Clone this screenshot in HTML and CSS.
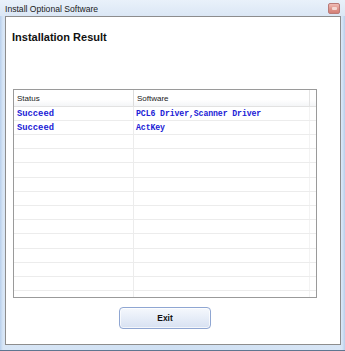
FILE: index.html
```html
<!DOCTYPE html>
<html>
<head>
<meta charset="utf-8">
<link rel="stylesheet" href="styles.css">
</head>
<body>
<div class="window">
  <div class="titlebar">
    <span class="title">Install Optional Software</span>
    <span class="close"><span class="close-glyph"></span></span>
  </div>
  <div class="client">
    <h1 class="heading">Installation Result</h1>
    <div class="table">
      <div class="row head">
        <div class="cell c1">Status</div>
        <div class="cell c2">Software</div>
        <div class="cell c3"></div>
      </div>
      <div class="rows">
        <div class="row"><div class="cell c1 status">Succeed</div><div class="cell c2 soft">PCL6 Driver,Scanner Driver</div><div class="cell c3"></div></div>
        <div class="row"><div class="cell c1 status">Succeed</div><div class="cell c2 soft">ActKey</div><div class="cell c3"></div></div>
        <div class="row"><div class="cell c1"></div><div class="cell c2"></div><div class="cell c3"></div></div>
        <div class="row"><div class="cell c1"></div><div class="cell c2"></div><div class="cell c3"></div></div>
        <div class="row"><div class="cell c1"></div><div class="cell c2"></div><div class="cell c3"></div></div>
        <div class="row"><div class="cell c1"></div><div class="cell c2"></div><div class="cell c3"></div></div>
        <div class="row"><div class="cell c1"></div><div class="cell c2"></div><div class="cell c3"></div></div>
        <div class="row"><div class="cell c1"></div><div class="cell c2"></div><div class="cell c3"></div></div>
        <div class="row"><div class="cell c1"></div><div class="cell c2"></div><div class="cell c3"></div></div>
        <div class="row"><div class="cell c1"></div><div class="cell c2"></div><div class="cell c3"></div></div>
        <div class="row"><div class="cell c1"></div><div class="cell c2"></div><div class="cell c3"></div></div>
        <div class="row"><div class="cell c1"></div><div class="cell c2"></div><div class="cell c3"></div></div>
        <div class="row"><div class="cell c1"></div><div class="cell c2"></div><div class="cell c3"></div></div>
        <div class="row"><div class="cell c1"></div><div class="cell c2"></div><div class="cell c3"></div></div>
      </div>
    </div>
    <div class="actions">
      <button class="btn">Exit</button>
    </div>
  </div>
</div>
</body>
</html>
```
FILE: styles.css
```css
* { box-sizing: border-box; }
html, body { margin: 0; padding: 0; background: #fff; }
.window {
  width: 345px;
  height: 351px;
  display: flex;
  flex-direction: column;
  background: linear-gradient(90deg, #b9d0ec 0, #d8e6f6 3px, #cfe0f3 50%, #d8e6f6 calc(100% - 3px), #b9d0ec 100%);
  border-bottom: 1px solid #5f7690;
  font-family: "Liberation Sans", Arial, sans-serif;
}
.titlebar {
  height: 16px;
  flex: none;
  display: flex;
  align-items: center;
  justify-content: space-between;
  padding: 0 5px 0 5px;
  background: linear-gradient(180deg, #e9f1fa 0, #dbe7f5 100%);
}
.title {
  font-size: 8.6px;
  color: #1b1b1b;
  padding-top: 1px;
}
.close {
  width: 12px;
  height: 11px;
  margin-top: 1px;
  border: 1px solid #b97a78;
  border-radius: 2px;
  background: linear-gradient(180deg, #f0bcb6 0, #de948c 55%, #d47f76 100%);
  display: flex;
  align-items: center;
  justify-content: center;
}
.close-glyph {
  width: 5px;
  height: 3px;
  background: #f4d8d4;
  border-radius: 1px;
}
.client {
  flex: 1;
  margin: 0 4px 5px 5px;
  background: #fff;
  border: 1px solid #8d8d8d;
  display: flex;
  flex-direction: column;
  padding: 0 23px 0 7px;
}
.heading {
  margin: 13px 0 0 -1px;
  font-size: 11px;
  line-height: 14px;
  font-weight: bold;
  color: #111;
}
.table {
  margin-top: 45px;
  height: 209px;
  border: 1px solid #9a9a9a;
  display: flex;
  flex-direction: column;
  overflow: hidden;
}
.row {
  display: flex;
  height: 14px;
  border-bottom: 1px solid #ececec;
  flex: none;
}
.rows .row:nth-child(5n) { height: 15px; }
.row.head {
  height: 17px;
  border-bottom: 1px solid #e2e2e2;
  background: linear-gradient(180deg, #ffffff 0, #ffffff 60%, #f4f5f7 100%);
}
.cell {
  display: flex;
  align-items: center;
  padding-left: 3px;
  white-space: nowrap;
}
.c1 { width: 120px; border-right: 1px solid #ececec; }
.c2 { width: 176px; border-right: 1px solid #f3f3f3; padding-left: 2px; }
.c3 { flex: 1; }
.head .cell {
  font-size: 8px;
  color: #222;
  padding-top: 1px;
}
.head .c1 { border-right-color: #dcdcdc; }
.head .c2 { border-right-color: #e4e4e4; padding-left: 3px; }
.status, .soft {
  font-family: "Liberation Mono", "Courier New", monospace;
  font-weight: bold;
  color: #2121d6;
}
.status { font-size: 8.8px; }
.soft { font-size: 8.2px; letter-spacing: -0.1px; }
.actions {
  display: flex;
  justify-content: center;
  padding: 9px 0 0 0;
}
.btn {
  width: 92px;
  height: 22px;
  border: 1px solid #8fa6d2;
  border-radius: 4px;
  background: linear-gradient(180deg, #f5f8fd 0, #e8eef8 45%, #d7e1f2 100%);
  box-shadow: inset 0 0 0 1px rgba(255,255,255,0.7);
  font-family: "Liberation Sans", Arial, sans-serif;
  font-weight: bold;
  font-size: 8.4px;
  color: #111;
  padding: 0;
}
```
